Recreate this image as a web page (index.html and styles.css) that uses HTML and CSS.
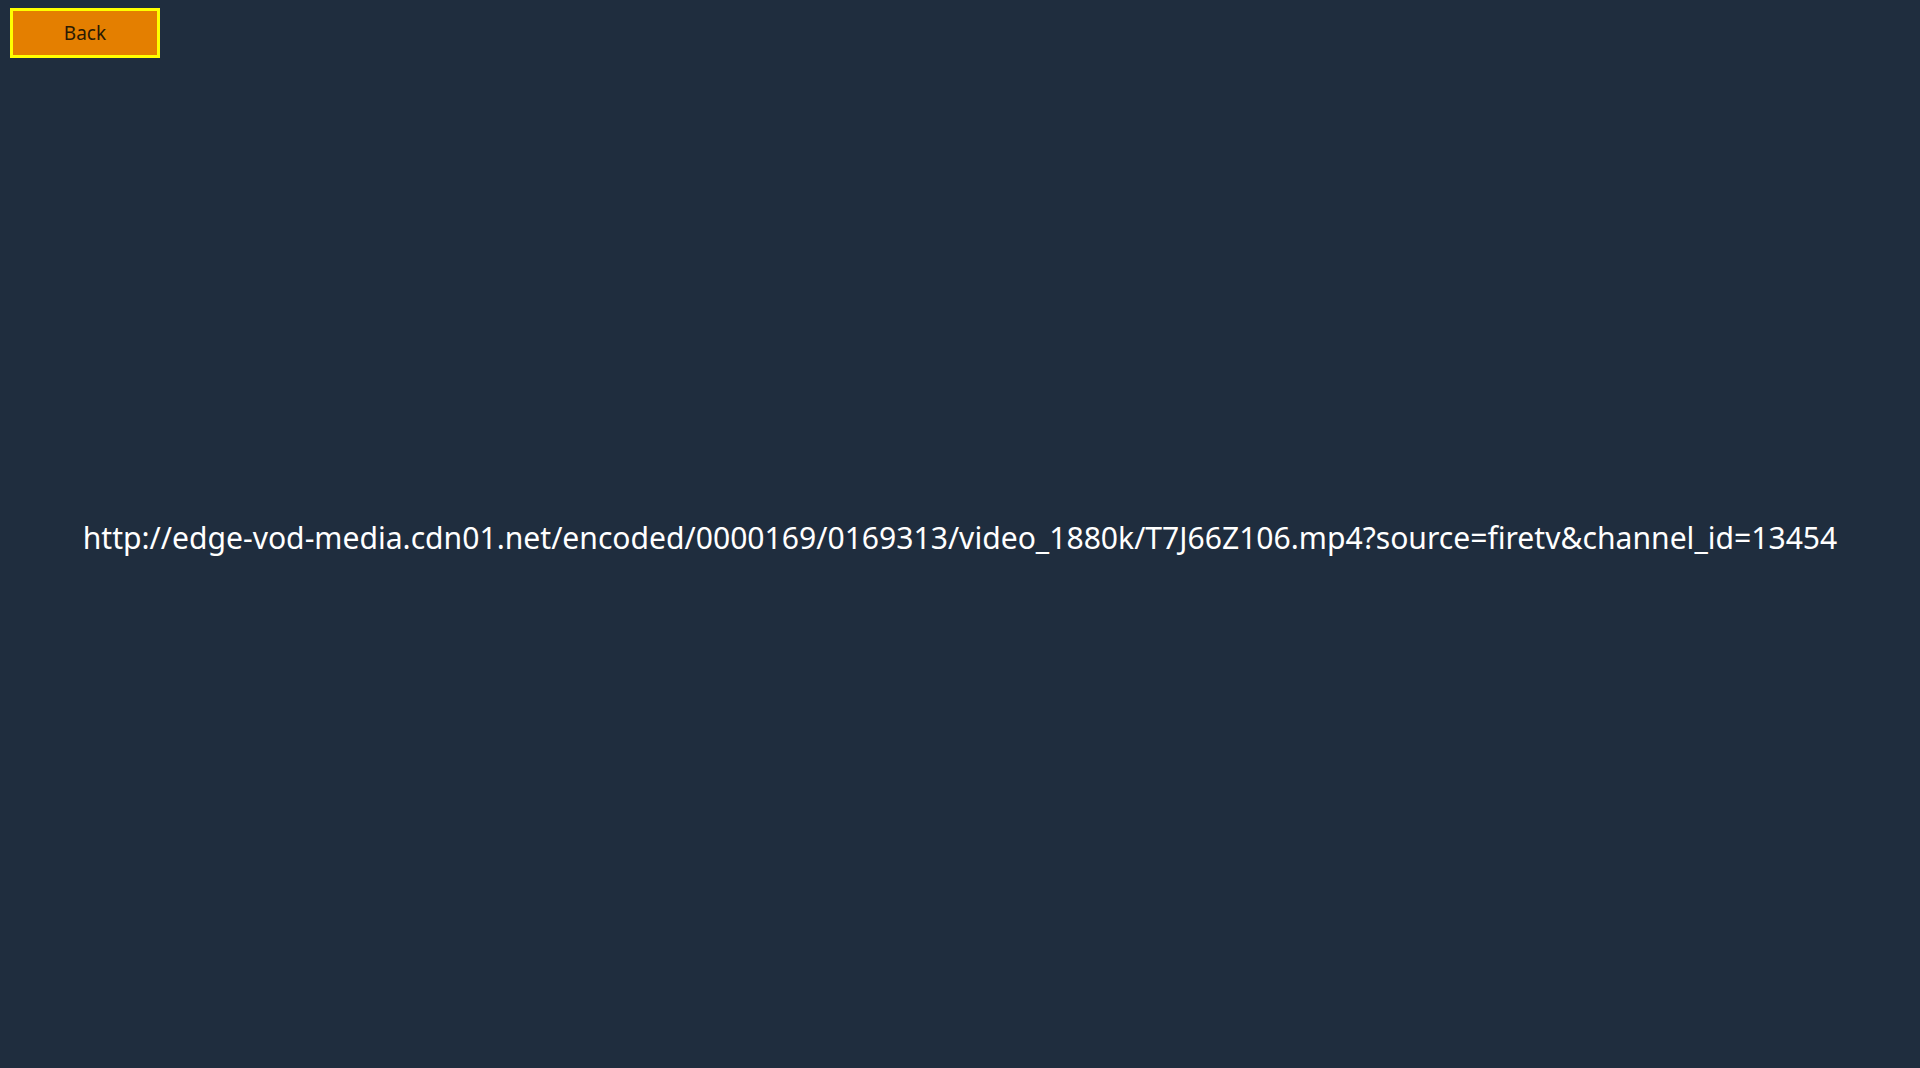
FILE: index.html
```html
<html><head>
	<meta charset="utf-8">
	<title>Player</title>
	<link rel="stylesheet" href="styles.css">
</head>
<body>
	<div class="page">
		<!-- top bar -->
		<div class="top">
			<button class="back-btn" id="back">Back</button>
		</div>
		<!-- stream url -->
		<div class="url-box">
			<p class="url">http://edge-vod-media.cdn01.net/encoded/0000169/0169313/video_1880k/T7J66Z106.mp4?source=firetv&amp;channel_id=13454</p>
		</div>
	</div>
</body></html>
```
FILE: styles.css
```css
* {
	margin: 0;
	padding: 0;
}

html, body {
	height: 100%;
}

body {
	background: #1f2d3e;
	color: #fff;
	font-family: "Noto Sans", "Open Sans", sans-serif;
}

.page {
	height: 100%;
	display: flex;
	flex-direction: column;
}

.top {
	padding: 8px 0 0 10px;
}

.back-btn {
	width: 150px;
	height: 50px;
	background: #e47f00;
	border: 3px solid #ffff00;
	color: #2a1a05;
	font-family: "Noto Sans", sans-serif;
	font-size: 19px;
	cursor: pointer;
}

.url-box {
	flex: 1;
	display: flex;
	align-items: center;
	justify-content: center;
	padding-bottom: 51px;
}

.url {
	font-size: 30.1px;
	white-space: nowrap;
}
```
